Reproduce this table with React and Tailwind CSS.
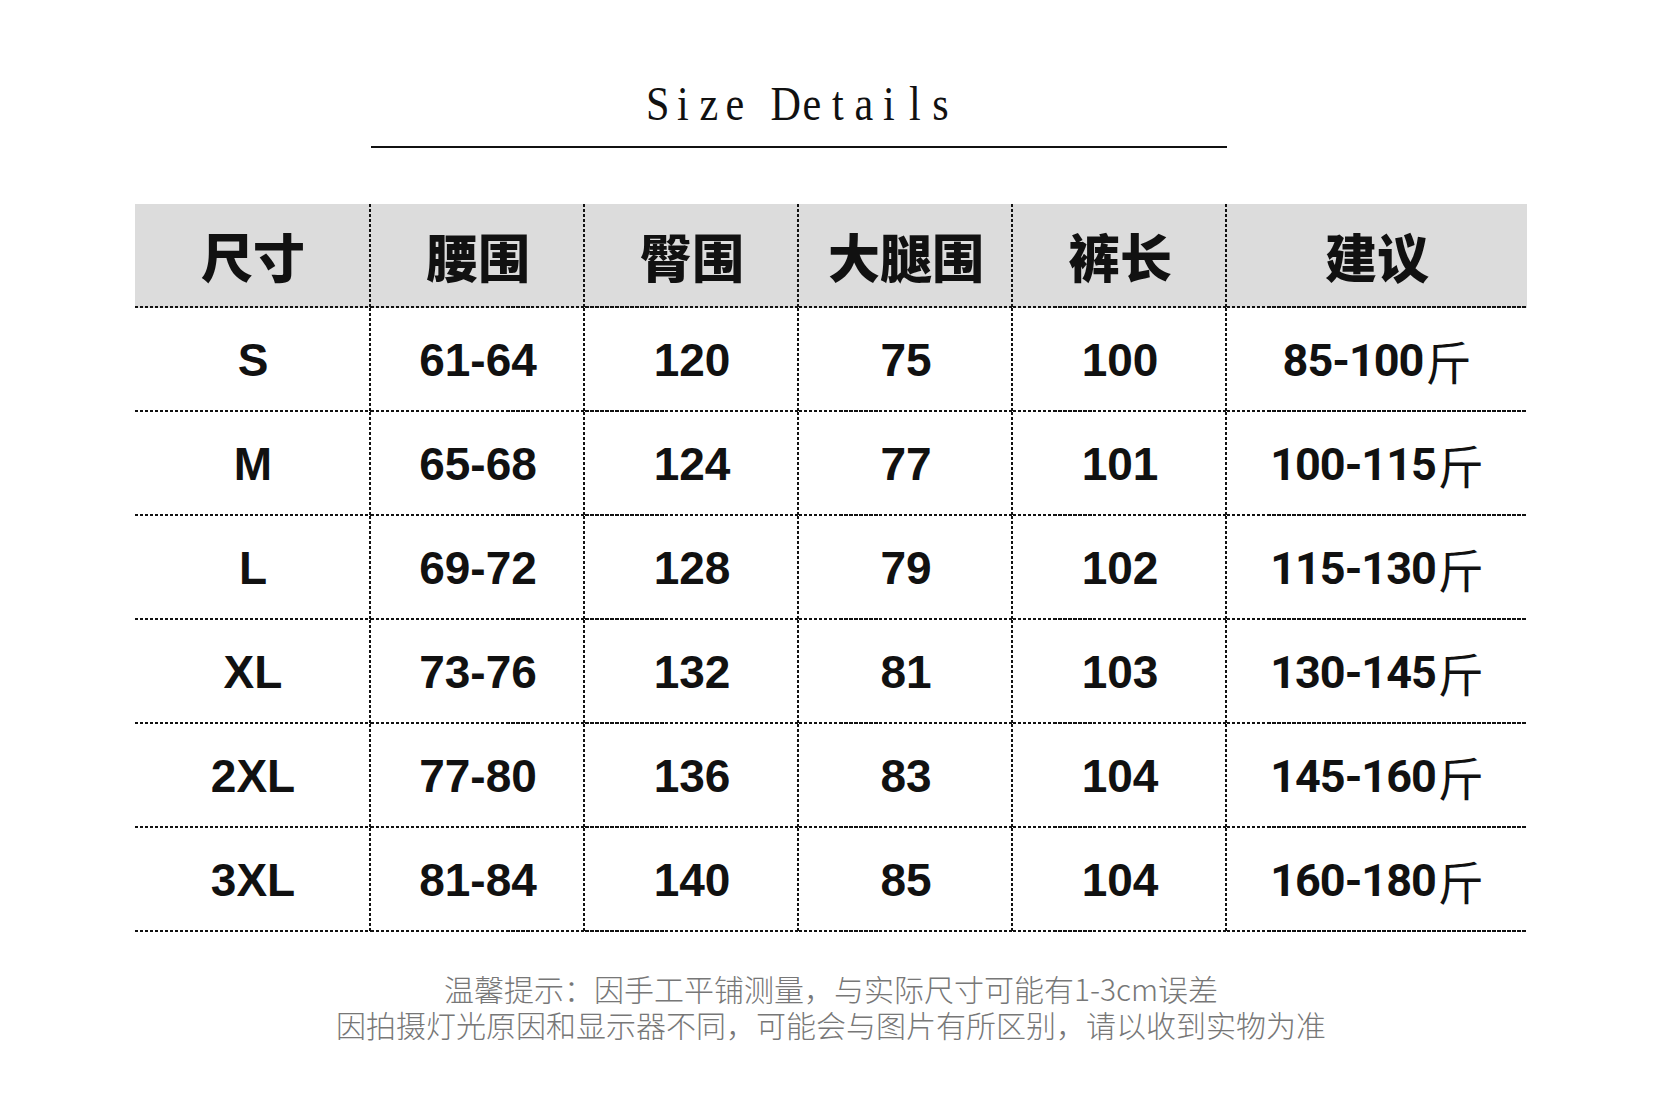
const rows = [
  ['S', '61-64', '120', '75', '100', '85-100'],
  ['M', '65-68', '124', '77', '101', '100-115'],
  ['L', '69-72', '128', '79', '102', '115-130'],
  ['XL', '73-76', '132', '81', '103', '130-145'],
  ['2XL', '77-80', '136', '83', '104', '145-160'],
  ['3XL', '81-84', '140', '85', '104', '160-180'],
]

const heads = ['尺寸', '腰围', '臀围', '大腿围', '裤长', '建议']

const cols = 'grid grid-cols-[236px_214px_214px_214px_214px_300px]'

// dotted rules drawn as background layers: bottom always, right except last column
const lineBR =
  'bg-no-repeat [background-image:repeating-linear-gradient(90deg,#111_0_3.5px,transparent_3.5px_5px),repeating-linear-gradient(180deg,#111_0_3px,transparent_3px_5px)] [background-size:100%_2px,2px_100%] [background-position:left_bottom,right_top]'
const lineB =
  'bg-no-repeat [background-image:repeating-linear-gradient(90deg,#111_0_3.5px,transparent_3.5px_5px)] [background-size:100%_2px] [background-position:left_bottom]'

function Cell({ last, head, children }) {
  return (
    <div
      className={`h-[104px] flex items-center justify-center ${last ? lineB : lineBR} ${head ? 'bg-[#dcdcdc]' : ''}`}
    >
      {children}
    </div>
  )
}

// the title is set in a narrow fixed-pitch serif, so every letter gets its own cell
function Title({ text }) {
  return (
    <h1 className="flex justify-center font-['Liberation_Serif',serif] text-[49px] leading-[52px] text-[#111]">
      {text.split('').map((c, i) => (
        <span key={i} className="w-[25.75px] flex justify-center">
          <span className="inline-block scale-x-[0.86]">{c === ' ' ? '\u00a0' : c}</span>
        </span>
      ))}
    </h1>
  )
}

export default function App() {
  return (
    <div className="w-[1666px] h-[1102px] bg-white overflow-hidden">
      <div className="ml-[135px] w-[1392px]">
        <div className={cols}>
          <div className="col-start-2 col-span-4 pt-[78px]">
            <Title text="Size Details" />
            <div className="mt-[16px] h-[2px] bg-[#111]" />
          </div>
        </div>

        <div className={`${cols} mt-[56px]`}>
          {heads.map((h, i) => (
            <Cell key={h} head last={i === heads.length - 1}>
              <span className="font-['Noto_Sans_CJK_SC',sans-serif] font-black text-[52px] leading-none text-[#111]">
                {h}
              </span>
            </Cell>
          ))}

          {rows.map(r =>
            r.map((v, i) => (
              <Cell key={r[0] + i} last={i === r.length - 1}>
                {i === r.length - 1 ? (
                  <span className="flex items-center text-[#111]">
                    <span className="font-['Roboto',sans-serif] font-bold text-[45px] tracking-[-1px] leading-none">
                      {v}
                    </span>
                    <span className="font-['Noto_Sans_CJK_SC',sans-serif] font-normal text-[46px] leading-none ml-[2px]">
                      斤
                    </span>
                  </span>
                ) : (
                  <span className="font-['Liberation_Sans',Arial,sans-serif] font-bold text-[46px] leading-none text-[#111]">
                    {v}
                  </span>
                )}
              </Cell>
            ))
          )}
        </div>

        <div className="mt-[38px] text-center font-['Noto_Sans_CJK_SC',sans-serif] font-light text-[30px] leading-[36px] text-[#777]">
          <p>温馨提示：因手工平铺测量，与实际尺寸可能有1-3cm误差</p>
          <p>因拍摄灯光原因和显示器不同，可能会与图片有所区别，请以收到实物为准</p>
        </div>
      </div>
    </div>
  )
}
